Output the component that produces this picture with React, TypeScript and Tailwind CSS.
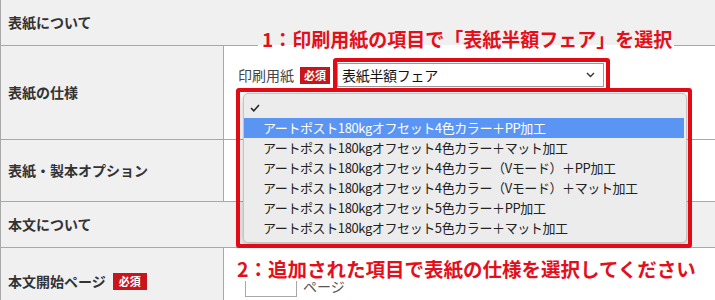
import React from "react";

const FONT = '"Noto Sans CJK JP", "Noto Sans", sans-serif';

function Badge({ className = "" }: { className?: string }) {
  return (
    <span
      className={`inline-flex items-center justify-center bg-[#c8141c] text-white font-bold text-[11px] leading-none ${className}`}
    >
      必須
    </span>
  );
}

const items = [
  "アートポスト180kgオフセット4色カラー＋PP加工",
  "アートポスト180kgオフセット4色カラー＋マット加工",
  "アートポスト180kgオフセット4色カラー（Vモード）＋PP加工",
  "アートポスト180kgオフセット4色カラー（Vモード）＋マット加工",
  "アートポスト180kgオフセット5色カラー＋PP加工",
  "アートポスト180kgオフセット5色カラー＋マット加工",
];

export default function App() {
  return (
    <div
      className="relative w-[715px] h-[300px] overflow-hidden bg-white text-[#333]"
      style={{ fontFamily: FONT }}
    >
      <div className="flex flex-col border-l border-[#a8a8a8]">
        {/* Row 1 */}
        <div className="h-[46px] flex items-center bg-[#f0f0f0] border-b border-[#a8a8a8] pl-[7px]">
          <span className="text-[14px] font-bold">表紙について</span>
        </div>
        {/* Row 2 */}
        <div className="h-[94px] flex border-b border-[#a8a8a8]">
          <div className="w-[223px] shrink-0 bg-[#f0f0f0] border-r border-[#a8a8a8] flex items-center pl-[7px]">
            <span className="text-[14px] font-bold">表紙の仕様</span>
          </div>
          <div className="flex-1 pl-[14px] pt-[17px]">
            <div className="flex items-center h-[24px]">
              <span className="text-[14px] text-[#444]">印刷用紙</span>
              <Badge className="ml-[6px] w-[30px] h-[17px]" />
              <div className="ml-[7px] w-[267px] h-[24px] border border-[#9a9a9a] bg-white flex items-center justify-between pl-[4px] pr-[8px]">
                <span className="text-[14px] text-[#111] tracking-[-0.3px]">表紙半額フェア</span>
                <svg width="9" height="6" viewBox="0 0 9 6">
                  <polyline points="1,1 4.5,4.5 8,1" fill="none" stroke="#333" strokeWidth="1.4" />
                </svg>
              </div>
            </div>
          </div>
        </div>
        {/* Row 3 */}
        <div className="h-[62px] flex border-b border-[#a8a8a8]">
          <div className="w-[223px] shrink-0 bg-[#f0f0f0] border-r border-[#a8a8a8] flex items-center pl-[7px]">
            <span className="text-[14px] font-bold">表紙・製本オプション</span>
          </div>
          <div className="flex-1" />
        </div>
        {/* Row 4 */}
        <div className="h-[46px] flex items-center bg-[#f0f0f0] border-b border-[#a8a8a8] pl-[7px]">
          <span className="text-[14px] font-bold">本文について</span>
        </div>
        {/* Row 5 */}
        <div className="h-[66px] flex">
          <div className="w-[223px] shrink-0 bg-[#f0f0f0] border-r border-[#a8a8a8] flex items-center pl-[7px]">
            <span className="text-[14px] font-bold">本文開始ページ</span>
            <Badge className="ml-[7px] w-[34px] h-[17px]" />
          </div>
          <div className="flex-1 pl-[21px] pt-[29px]">
            <div className="flex items-start">
              <div className="w-[52px] h-[20px] border border-[#a8a8a8] bg-white" />
              <span className="ml-[6px] text-[14px] text-[#555] leading-[18px]">ページ</span>
            </div>
          </div>
        </div>
      </div>

      {/* Annotation 1 */}
      <div
        className="absolute left-[258px] top-[27px] h-[24px] w-[416px] bg-[linear-gradient(to_bottom,#f0f0f0_18px,#ffffff_18px)] flex items-center pl-[4px] text-[19px] font-bold text-[#e3101c] leading-[24px] whitespace-nowrap"
      >
        1：印刷用紙の項目で「表紙半額フェア」を選択
      </div>

      {/* Red box around select */}
      <div className="absolute left-[333px] top-[58px] w-[277px] h-[34px] border-[4px] border-[#e20a14] rounded-[3px]" />

      {/* Dropdown menu */}
      <div className="absolute left-[243px] top-[93px] w-[444px] h-[150px] bg-[#ececec] border border-[#c4c4c4] rounded-[5px] shadow-[0_2px_6px_rgba(0,0,0,0.25)] pt-[4px] text-[13px] tracking-[-0.4px] text-[#222]">
        <div className="h-[20px] flex items-center pl-[6px]">
          <svg width="10" height="8" viewBox="0 0 10 8">
            <polyline points="1,4 3.8,6.8 9,1" fill="none" stroke="#222" strokeWidth="1.5" />
          </svg>
        </div>
        {items.map((t, i) => (
          <div
            key={i}
            className={`h-[20px] flex items-center pl-[19px] whitespace-nowrap ${
              i === 0 ? "bg-[#5b95f4] text-white mr-[2px]" : ""
            }`}
          >
            {t}
          </div>
        ))}
      </div>

      {/* Red box around dropdown */}
      <div className="absolute left-[236px] top-[88px] w-[456px] h-[160px] border-[4px] border-[#e20a14] rounded-[3px]" />

      {/* Annotation 2 */}
      <div className="absolute left-[235px] top-[257px] h-[24px] w-[464px] bg-white flex items-center pl-[2px] text-[19.5px] font-bold text-[#e3101c] leading-[24px] whitespace-nowrap">
        2：追加された項目で表紙の仕様を選択してください
      </div>
    </div>
  );
}
